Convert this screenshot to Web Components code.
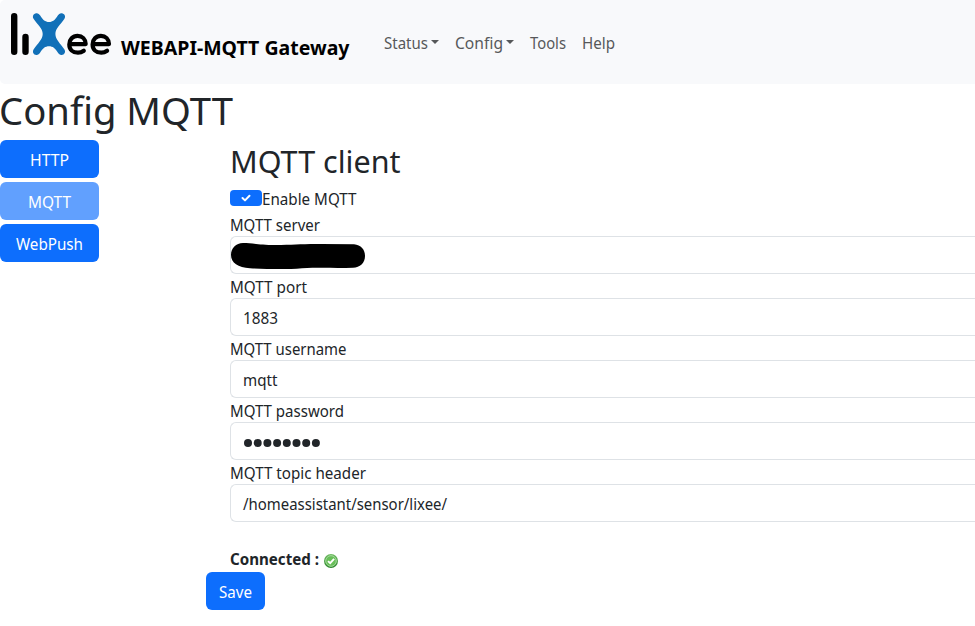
<!DOCTYPE html>
<html lang="en">
<head>
<meta charset="utf-8">
<title>Config MQTT</title>
<style>
html,body{margin:0;background:#fff;overflow:hidden}
body{font:15.4px/24px "Noto Sans","Open Sans",sans-serif;color:#212529;width:975px;height:626px}
</style>
</head>
<body>
<gateway-page></gateway-page>
<script>
const define=(name,html,setup)=>customElements.define(name,class extends HTMLElement{
  constructor(){super();this.attachShadow({mode:'open'})}
  connectedCallback(){
    this.shadowRoot.innerHTML=typeof html==='function'?html(this):html;
    if(setup)setup(this);
  }
});

/* One line of text condensed or widened to an exact advance width. */
define('fit-text','<style>:host{display:inline-block;white-space:nowrap;text-align:left}span{display:inline-block;transform-origin:0 50%}</style><span><slot></slot></span>',el=>{
  const s=el.shadowRoot.querySelector('span'),w=+el.getAttribute('w');
  const dy=el.getAttribute('dy')||2;
  s.style.transform=`translateY(${dy}px) scaleX(${w/s.getBoundingClientRect().width})`;
  el.style.width=w+'px';
});

define('lixee-logo',`<style>:host{display:block;width:102px;height:46px}svg{display:block}</style>
<svg width="102" height="46" viewBox="10 12 102 46" fill="none" stroke="#000" stroke-linecap="round">
<path d="M14.2 16.2V51.8M25.5 37V51.8" stroke-width="6.4"/>
<path d="M36.3 13.2C38 13 39.3 14 40.2 15.6C42.8 20 45.2 22.1 49 22.1S55.2 20 57.8 15.6C58.7 14 60 13 61.7 13.2C64.7 13.6 66 16.5 64.3 19C60.5 24.6 55.4 28.4 55.4 34S60.5 43.6 64.3 49.2C66 51.7 64.6 54.8 61.6 55C60 55.1 58.8 54.2 57.8 52.6C55.2 48.2 52.8 46.2 49 46.2S42.8 48.2 40.2 52.6C39.2 54.2 38 55.1 36.4 55C33.4 54.8 32 51.7 33.7 49.2C37.5 43.6 42.7 39.6 42.7 34S37.5 24.6 33.7 19C32 16.5 33.3 13.6 36.3 13.2Z" fill="#1170b8" stroke="none"/>
<path id="e" d="M70 44.1H85.7C85.6 39.1 82.3 35.9 77.6 35.9C72.8 35.9 69.3 39.5 69.3 44.4C69.3 49.4 72.8 52.7 78 52.7C80.3 52.7 82.2 51.9 83.8 50.7" stroke-width="4.2" stroke-linejoin="round"/>
<use href="#e" x="23.3"/></svg>`);

define('nav-link',el=>`<style>:host{display:flex;padding:8px;color:#56585a}i{align-self:center;margin:-2px 0 0 3px;border:4.5px solid transparent;border-top-color:currentColor;border-bottom:0}</style><fit-text w="${el.getAttribute('w')}" dy="1"><slot></slot></fit-text>${el.hasAttribute('menu')?'<i></i>':''}`);

define('top-bar',`<style>:host{display:flex;height:84px;background:#f8f9fb;border-radius:5px 0 0 5px;box-sizing:border-box;padding-left:10px}
lixee-logo{margin-top:12px}b{font-size:19.2px;line-height:30px;color:#000;margin:32px 0 0 9px}nav{display:flex;height:40px;margin:23px 0 0 26px}</style>
<lixee-logo></lixee-logo><b><fit-text w="228.500" dy="1">WEBAPI-MQTT Gateway</fit-text></b>
<nav><nav-link w="44" menu>Status</nav-link><nav-link w="48" menu>Config</nav-link><nav-link w="36">Tools</nav-link><nav-link w="33">Help</nav-link></nav>`);

define('push-button',el=>`<style>:host{display:flex;justify-content:center;align-items:center;height:38px;border-radius:6px;background:#0d6efd;color:#fff}:host([active]){background:#61a0fe}</style><fit-text w="${el.getAttribute('w')}"><slot></slot></fit-text>`);

define('toggle-switch',`<style>:host{display:flex;justify-content:center;align-items:center;width:32px;height:16px;border-radius:4px;background:#0d6efd}</style>
<svg width="10" height="8" viewBox="0 0 10 8"><path d="M1.5 4L4 6.4L8.5 1.8" fill="none" stroke="#fff" stroke-width="2" stroke-linecap="round" stroke-linejoin="round"/></svg>`);

define('form-field',el=>`<style>:host{display:block;height:62px}label{display:block;height:24px}div{height:38px;box-sizing:border-box;border:1px solid #dee2e6;border-right:0;border-radius:6px 0 0 6px;display:flex;align-items:center;padding-left:12px}::slotted(svg){flex:none}</style>
<label><fit-text w="${el.getAttribute('w')}">${el.getAttribute('label')}</fit-text></label><div><slot></slot></div>`);

define('status-icon',`<style>:host{display:block;width:14px;height:14px}svg{display:block}</style>
<svg width="14" height="14" viewBox="0 0 14 14"><defs><linearGradient id="g" x1="0" y1="0" x2="0" y2="1"><stop stop-color="#70bd63"/><stop offset="1" stop-color="#2a8429"/></linearGradient></defs><circle cx="7" cy="7" r="7" fill="url(#g)"/><circle cx="7" cy="7" r="5.3" fill="#68bf58" stroke="#a7dba0" stroke-width="1"/><path d="M4 7.1L6.2 9.2L10.1 4.9" fill="none" stroke="#fff" stroke-width="1.9"/></svg>`);

define('mqtt-form',`<style>:host{display:block;width:745px}
h2{font-weight:400;font-size:31px;line-height:38px;margin:0 0 8px}.check{display:flex;height:26px}.check toggle-switch{margin-top:4px}.state{display:flex;align-items:center;height:24px;margin-top:26px;font-weight:700}status-icon{margin:1px 0 0 5px}
.save{width:59px;margin-left:-24px}.mask{margin:1px 0 0 -13px}.dots{display:block;margin:2px 0 0 -.5px}</style>
<h2><fit-text w="170.500">MQTT client</fit-text></h2>
<div class="check"><toggle-switch></toggle-switch><fit-text w="94.500">Enable MQTT</fit-text></div>
<form-field label="MQTT server" w="90"><svg class="mask" width="136" height="28" viewBox="230 242 136 28"><path d="M243 243C252 243 259 245 275 245C294 245 300 243.800 321 244L354 244.300C361 245 365 249.500 365 256C365 263 360 267.500 353 267.700C338 268.200 319 267.500 302 268.200C286 269.600 267 269 250 268.200C238 267.500 231 263 231 255C231 248 236 243 243 243Z"/></svg></form-field>
<form-field label="MQTT port" w="77"><fit-text w="35">1883</fit-text></form-field>
<form-field label="MQTT username" w="116.500"><fit-text w="34.500">mqtt</fit-text></form-field>
<form-field label="MQTT password" w="114"><svg class="dots" width="80" height="10" viewBox="0 0 80 10" fill="#212529"><circle cx="5" cy="6" r="4"/><circle cx="14.700" cy="6" r="4"/><circle cx="24.400" cy="6" r="4"/><circle cx="34.100" cy="6" r="4"/><circle cx="43.800" cy="6" r="4"/><circle cx="53.500" cy="6" r="4"/><circle cx="63.200" cy="6" r="4"/><circle cx="72.900" cy="6" r="4"/></svg></form-field>
<form-field label="MQTT topic header" w="136"><fit-text w="204">/homeassistant/sensor/lixee/</fit-text></form-field>
<div class="state"><fit-text w="89" dy="0">Connected :</fit-text><status-icon></status-icon></div>
<push-button class="save" w="33">Save</push-button>`);

define('gateway-page',`<style>:host{display:block}h1{font-weight:400;font-size:38.8px;line-height:48px;margin:0 0 8px -1px}main{display:flex;gap:131px}aside{display:flex;flex-direction:column;gap:4px;width:99px;flex:none}aside push-button{flex:none}mqtt-form{flex:none}</style>
<top-bar></top-bar><h1><fit-text w="234">Config MQTT</fit-text></h1>
<main><aside><push-button w="39">HTTP</push-button><push-button active w="43">MQTT</push-button><push-button w="67">WebPush</push-button></aside><mqtt-form></mqtt-form></main>`);
</script>
</body>
</html>
